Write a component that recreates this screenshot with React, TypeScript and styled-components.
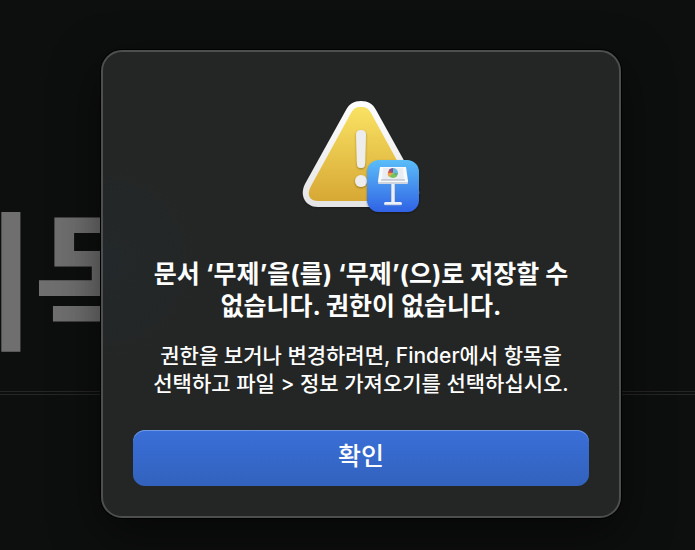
import React from "react";
import styled, { createGlobalStyle } from "styled-components";

const GlobalStyle = createGlobalStyle`
  * { box-sizing: border-box; }
  body {
    margin: 0;
    background: #0d0f0e;
    color: #fff;
    font-family: Inter, "Noto Sans CJK KR", sans-serif;
  }
`;

const Screen = styled.div`
  display: grid;
  min-height: 100vh;
  overflow: hidden;
  background: #0d0f0e;
`;

const Slide = styled.div`
  grid-area: 1 / 1;
  min-width: 0;
  overflow: hidden;
  padding-top: 168px;
`;

const SlideTitle = styled.div`
  margin-left: -105px;
  height: 223px;
  font-family: "Noto Sans CJK KR", sans-serif;
  font-size: 150px;
  font-weight: 700;
  line-height: 210px;
  white-space: nowrap;
  color: #6f6f6f;
`;

const SlideRule = styled.div`
  height: 4px;
  border: solid #252525;
  border-width: 1px 0;
`;

const Stage = styled.main`
  grid-area: 1 / 1;
  z-index: 1;
  min-width: 0;
  padding: 50px 74px 32px 101px;
`;

const Dialog = styled.section`
  display: flex;
  flex-direction: column;
  align-items: center;
  padding: 46px 30px 30px;
  border: 2px solid #4d4e4e;
  border-radius: 21px;
  background: radial-gradient(circle at 0 45%, #23282a 0, #242625 110px);
  box-shadow: 0 0 0 1px #000, 0 16px 48px rgba(0, 0, 0, 0.55);
  text-align: center;
`;

const AlertIcon = styled.svg`
  display: block;
  width: 128px;
  height: 124px;
`;

const Heading = styled.h1`
  margin: 36px 0 0;
  font-size: 25px;
  font-weight: 700;
  line-height: 32px;
  white-space: nowrap;
`;

const Message = styled.p`
  margin: 20px 0 0;
  font-size: 21px;
  font-weight: 500;
  line-height: 28px;
  white-space: nowrap;
`;

const ConfirmButton = styled.button`
  width: 100%;
  height: 56px;
  margin-top: 32px;
  padding: 0 0 8px;
  border: 0;
  border-radius: 12px;
  background: linear-gradient(#3a6fd8, #3262bd);
  box-shadow: inset 0 1px 0 #6f98e6;
  color: #fff;
  font: inherit;
  font-size: 25px;
  font-weight: 500;
`;

function WarningIcon() {
  return (
    <AlertIcon viewBox="0 0 128 124" role="img" aria-label="Keynote">
      <defs>
        <linearGradient id="rim" x1="0" y1="0" x2="0" y2="1">
          <stop offset="0" stopColor="#ffffff" />
          <stop offset="1" stopColor="#e4e4e4" />
        </linearGradient>
        <linearGradient id="gold" x1="0" y1="0" x2="0" y2="1">
          <stop offset="0" stopColor="#f9e263" />
          <stop offset="1" stopColor="#d7a834" />
        </linearGradient>
        <linearGradient id="blue" x1="0" y1="0" x2="0" y2="1">
          <stop offset="0" stopColor="#5bbdf8" />
          <stop offset="1" stopColor="#3063e5" />
        </linearGradient>
        <linearGradient id="pole" x1="0" y1="0" x2="1" y2="0">
          <stop offset="0" stopColor="#b4bcc8" />
          <stop offset="0.5" stopColor="#ffffff" />
          <stop offset="1" stopColor="#b8c1cf" />
        </linearGradient>
        <filter id="soft" x="-20%" y="-20%" width="140%" height="150%">
          <feDropShadow dx="0" dy="1" stdDeviation="1" floodColor="#000" floodOpacity="0.35" />
        </filter>
      </defs>
      <path
        d="M49 12C52 6 57 3 64 3C71 3 76 6 79 12L120 86C126 98 119 109 107 109H21C9 109 2 98 8 86Z"
        fill="url(#rim)"
        filter="url(#soft)"
      />
      <path
        d="M54 15C57 10 59 9 64 9C69 9 71 10 74 15L114 88C119 97 115 103 107 103H21C13 103 9 97 14 88Z"
        fill="url(#gold)"
      />
      <g filter="url(#soft)" fill="#ededed">
        <path d="M59 37Q59 32 64 32Q69 32 69 37L68 66Q68 70 64 70Q60 70 60 66Z" />
        <circle cx="64" cy="83" r="6" />
      </g>
      <rect x="70" y="62" width="52" height="52" rx="12" fill="url(#blue)" filter="url(#soft)" />
      <rect x="94" y="85" width="4" height="21" fill="url(#pole)" />
      <rect x="87" y="104" width="18" height="3" rx="1.5" fill="#edf1f8" />
      <path d="M88 107H104" stroke="#91a3c6" strokeWidth="0.7" />
      <path d="M83 69H109L111 83Q111 86 109 86H83Q81 86 81 83Z" fill="#f8f9fb" />
      <path d="M85 82H107L106 70H86Z" fill="#e9edf2" />
      <path d="M84 82H108" stroke="#a3adbb" strokeWidth="1" />
      <path d="M81 84H111V85Q111 86 109 86H83Q81 86 81 85Z" fill="#cfd5df" />
      <path d="M96 75V70A5 5 0 0 1 101 75Z" fill="#63bbdc" />
      <path d="M96 75H101A5 5 0 0 1 99 79Z" fill="#5fae85" />
      <path d="M96 75L100 78A5 5 0 0 1 92 78Z" fill="#79c259" />
      <path d="M96 75L92 79A5 5 0 0 1 91 74Z" fill="#eba348" />
      <path d="M96 75L91 75A5 5 0 0 1 93 71Z" fill="#d65245" />
      <path d="M96 75L92 72A5 5 0 0 1 96 70Z" fill="#89508f" />
    </AlertIcon>
  );
}

export default function App() {
  return (
    <>
      <GlobalStyle />
      <Screen lang="ko">
        <Slide aria-hidden="true">
          <SlideTitle>제목</SlideTitle>
          <SlideRule />
        </Slide>
        <Stage>
          <Dialog role="alertdialog" aria-labelledby="alert-title" aria-describedby="alert-message">
            <WarningIcon />
            <Heading id="alert-title">
              문서 ‘무제’을(를) ‘무제’(으)로 저장할 수
              <br />
              없습니다. 권한이 없습니다.
            </Heading>
            <Message id="alert-message">
              권한을 보거나 변경하려면, Finder에서 항목을
              <br />
              선택하고 파일 &gt; 정보 가져오기를 선택하십시오.
            </Message>
            <ConfirmButton type="button">확인</ConfirmButton>
          </Dialog>
        </Stage>
      </Screen>
    </>
  );
}
